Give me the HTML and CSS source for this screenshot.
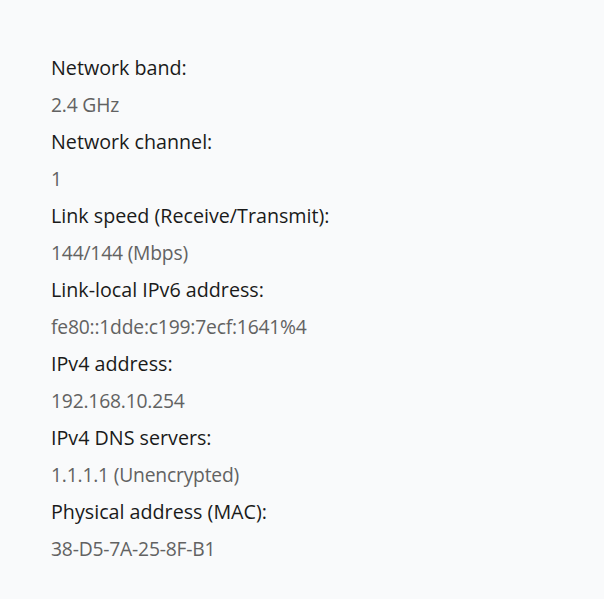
FILE: index.html
```html
<!DOCTYPE html>
<html>
<head>
<meta charset="utf-8">
<link rel="stylesheet" href="styles.css">
</head>
<body>
<div class="props">
  <div class="label">Network band:</div>
  <div class="value">2.4 GHz</div>
  <div class="label">Network channel:</div>
  <div class="value">1</div>
  <div class="label">Link speed (Receive/Transmit):</div>
  <div class="value">144/144 (Mbps)</div>
  <div class="label">Link-local IPv6 address:</div>
  <div class="value">fe80::1dde:c199:7ecf:1641%4</div>
  <div class="label">IPv4 address:</div>
  <div class="value">192.168.10.254</div>
  <div class="label">IPv4 DNS servers:</div>
  <div class="value">1.1.1.1 (Unencrypted)</div>
  <div class="label">Physical address (MAC):</div>
  <div class="value">38-D5-7A-25-8F-B1</div>
</div>
</body>
</html>
```
FILE: styles.css
```css
html, body {
  margin: 0;
  padding: 0;
  background: #f9fafb;
  height: 100%;
}
.props {
  padding: 49px 0 0 51px;
  font-family: "Open Sans", "Noto Sans", sans-serif;
  font-size: 19.7px;
  display: flex;
  flex-direction: column;
}
.label, .value {
  height: 37px;
  line-height: 37px;
  white-space: nowrap;
}
.label { color: #1a1a1a; }
.value { color: #626262; font-size: 19.3px; letter-spacing: -0.2px; }
```
